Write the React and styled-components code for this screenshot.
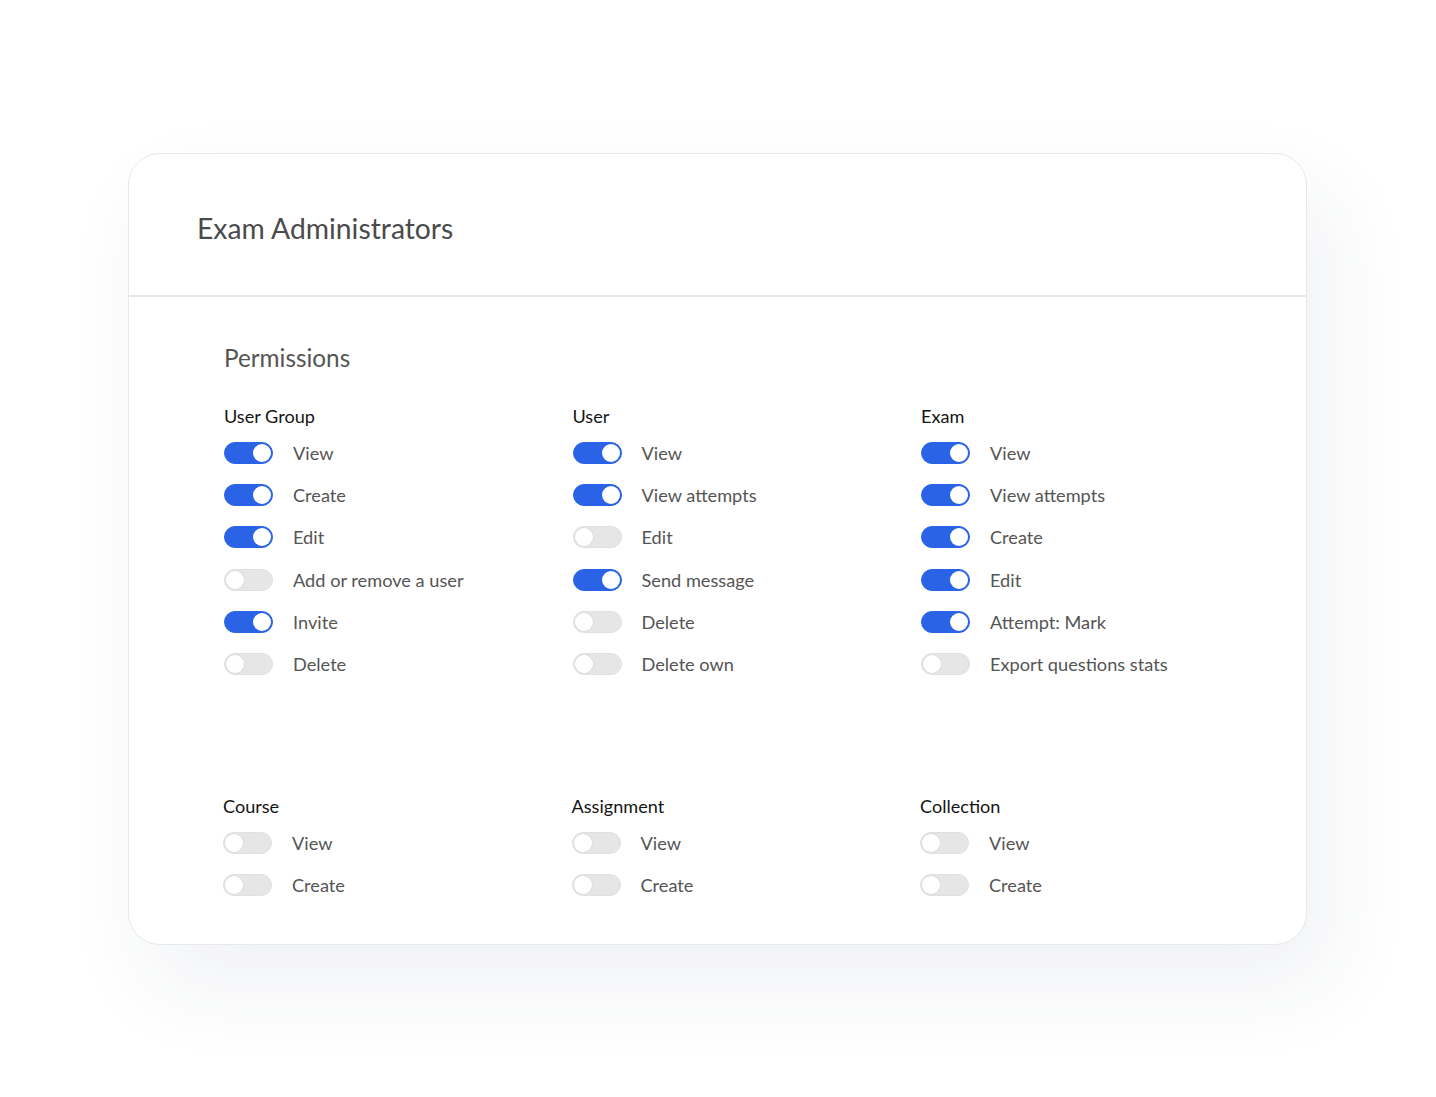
import React from "react";
import styled, { createGlobalStyle } from "styled-components";

const GlobalStyle = createGlobalStyle`
  html, body {
    margin: 0;
    padding: 0;
    background: #ffffff;
  }
  body {
    font-family: Lato, "Open Sans", "Liberation Sans", sans-serif;
    -webkit-font-smoothing: antialiased;
  }
`;

const Page = styled.div`
  min-height: 1097px;
  padding: 153px 0 0 128px;
  box-sizing: border-box;
`;

const Card = styled.section`
  width: 1179px;
  box-sizing: border-box;
  background: #ffffff;
  border: 1px solid #e3e9ef;
  border-radius: 32px;
  box-shadow: 22px 40px 90px rgba(40, 60, 100, 0.07);
`;

const Header = styled.header`
  height: 143px;
  display: flex;
  align-items: center;
  padding: 6px 0 0 68px;
  box-sizing: border-box;
  border-bottom: 2px solid #e6e6e6;
`;

const Title = styled.h1`
  margin: 0;
  font-size: 28.3px;
  font-weight: 400;
  color: #4a4a4a;
  line-height: 34px;
`;

const Body = styled.div`
  padding: 46px 0 37px 95px;
`;

const SectionTitle = styled.h2`
  margin: 0;
  font-size: 24.3px;
  font-weight: 400;
  line-height: 30px;
  color: #555555;
`;

const Grid = styled.div`
  display: grid;
  grid-template-columns: repeat(3, 348.5px);
  margin-top: ${(p) => p.$top}px;
  margin-left: ${(p) => p.$shift || 0}px;
`;

const Group = styled.div`
  display: flex;
  flex-direction: column;
`;

const GroupName = styled.h3`
  margin: 0;
  font-size: 18.1px;
  font-weight: 400;
  line-height: 22px;
  color: #141414;
`;

const List = styled.ul`
  list-style: none;
  margin: 5px 0 0;
  padding: 0;
`;

const Row = styled.li`
  height: 42.2px;
  display: flex;
  align-items: center;
  gap: 20px;
`;

const Track = styled.span`
  position: relative;
  width: 49px;
  height: 22px;
  box-sizing: border-box;
  border-radius: 11px;
  flex: none;
  background: ${(p) => (p.$on ? "#2a63e6" : "#e6e6e6")};
  border: 1px solid ${(p) => (p.$on ? "#2a63e6" : "#e0e0e0")};
`;

const Knob = styled.span`
  position: absolute;
  top: 1px;
  left: ${(p) => (p.$on ? "28px" : "1px")};
  width: 18px;
  height: 18px;
  border-radius: 50%;
  background: #ffffff;
  box-shadow: ${(p) => (p.$on ? "none" : "0 0 0 1px #dedede")};
`;

const Label = styled.span`
  font-size: 18.2px;
  line-height: 22px;
  color: #555555;
`;

const Toggle = ({ on }) => (
  <Track $on={on} role="switch" aria-checked={on}>
    <Knob $on={on} />
  </Track>
);

const topGroups = [
  {
    name: "User Group",
    items: [
      ["View", true],
      ["Create", true],
      ["Edit", true],
      ["Add or remove a user", false],
      ["Invite", true],
      ["Delete", false],
    ],
  },
  {
    name: "User",
    items: [
      ["View", true],
      ["View attempts", true],
      ["Edit", false],
      ["Send message", true],
      ["Delete", false],
      ["Delete own", false],
    ],
  },
  {
    name: "Exam",
    items: [
      ["View", true],
      ["View attempts", true],
      ["Create", true],
      ["Edit", true],
      ["Attempt: Mark", true],
      ["Export questions stats", false],
    ],
  },
];

const bottomGroups = [
  { name: "Course", items: [["View", false], ["Create", false]] },
  { name: "Assignment", items: [["View", false], ["Create", false]] },
  { name: "Collection", items: [["View", false], ["Create", false]] },
];

const Groups = ({ groups, top, shift }) => (
  <Grid $top={top} $shift={shift}>
    {groups.map((g) => (
      <Group key={g.name}>
        <GroupName>{g.name}</GroupName>
        <List>
          {g.items.map(([label, on]) => (
            <Row key={label}>
              <Toggle on={on} />
              <Label>{label}</Label>
            </Row>
          ))}
        </List>
      </Group>
    ))}
  </Grid>
);

export default function App() {
  return (
    <>
      <GlobalStyle />
      <Page>
        <Card>
          <Header>
            <Title>Exam Administrators</Title>
          </Header>
          <Body>
            <SectionTitle>Permissions</SectionTitle>
            <Groups groups={topGroups} top={32} />
            <Groups groups={bottomGroups} top={110} shift={-1} />
          </Body>
        </Card>
      </Page>
    </>
  );
}
